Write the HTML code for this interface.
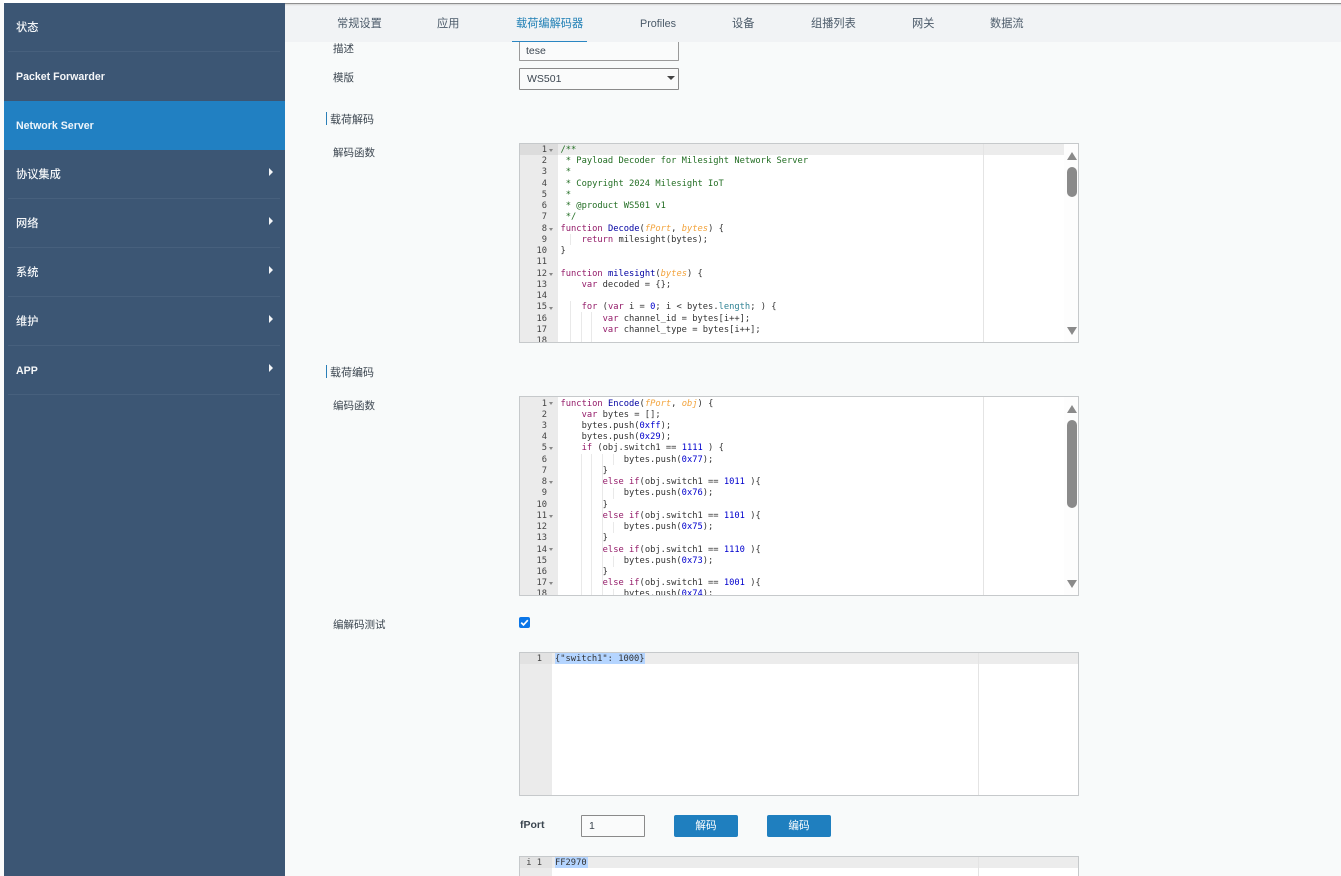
<!DOCTYPE html>
<html lang="zh"><head><meta charset="utf-8"><title>Network Server</title>
<style>
html{margin:0;padding:0;width:1341px;height:876px;overflow:hidden;background:#f8fafa;}
body{margin:0;padding:0;background:#f8fafa;width:1341px;height:876px;position:relative;overflow:hidden;font-family:"Liberation Sans","Noto Sans CJK SC",sans-serif;font-size:11px;color:#3c4650;}
.a{position:absolute;white-space:nowrap;}
#side{left:4px;top:3px;width:281px;height:873px;background:#3c5674;}
.item{position:absolute;left:12px;color:#f4f6f8;font-weight:500;font-size:11.2px;line-height:14px;}
.lat{font-weight:bold;font-size:10.6px;}
.sep{position:absolute;left:4px;width:272px;height:1px;background:#47607d;}
.arr{position:absolute;left:265px;width:0;height:0;border-left:4px solid #f4f6f8;border-top:4px solid transparent;border-bottom:4px solid transparent;}
.tab{position:absolute;top:17px;font-size:11.2px;line-height:14px;color:#4b5a69;}
.lab{position:absolute;left:333px;font-size:10.5px;line-height:14px;color:#3c4650;}
.h{position:absolute;left:330px;font-size:11px;line-height:14px;color:#3c4650;}
.bar{position:absolute;left:326px;width:1px;height:13px;background:#2a7fb8;}
.box{position:absolute;left:519px;width:558px;border:1px solid #c6c9cb;background:#fff;overflow:hidden;}
.gut{position:absolute;left:0;top:0;bottom:0;background:#ebebeb;}
.act{position:absolute;left:0;right:0;top:0;height:11px;background:#ececec;}
.actg{position:absolute;left:0;top:0;height:11px;background:#dcdcdc;}
.pm{position:absolute;top:0;bottom:0;width:1px;background:#e4e4e4;}
.code,.nums{position:absolute;top:1px;font-family:"DejaVu Sans Mono","Liberation Mono",monospace;font-size:8.75px;line-height:11.23px;white-space:pre;color:#333;}
.nums{left:0;text-align:right;color:#444;}
.fold{position:absolute;left:29px;margin-top:1px;width:0;height:0;border-top:3px solid #888;border-left:2px solid transparent;border-right:2px solid transparent;}
.g{position:absolute;width:1px;background:#e9e9e9;}
.sb{position:absolute;left:544px;top:0;bottom:0;width:14px;background:#fdfdfd;}
.up{position:absolute;left:547px;width:0;height:0;border-bottom:8px solid #8a8a8a;border-left:5px solid transparent;border-right:5px solid transparent;}
.dn{position:absolute;left:547px;width:0;height:0;border-top:8px solid #8a8a8a;border-left:5px solid transparent;border-right:5px solid transparent;}
.th{position:absolute;left:547px;width:10px;background:#8a8a8a;border-radius:5px;}
.c{color:#236e24}.k{color:#931a68}.f{color:#0000a2}.p{color:#f2a33c;font-style:italic}.n{color:#0000cd}.s{color:#318495}
.btn{position:absolute;top:815px;width:64px;height:22px;background:#1f7fbf;border-radius:2px;color:#fff;text-align:center;font-size:10.6px;line-height:22px;}
.sel{background:#b5d5ff;}
</style></head><body>

<div class="a" style="left:0;top:0;width:1341px;height:3px;background:#fff;"></div>
<div class="a" style="left:0;top:0;width:4px;height:876px;background:#fbfbfb;"></div>

<div class="a" style="left:285px;top:3px;width:1056px;height:39px;background:#f1f3f5;"></div>
<div class="a" style="left:285px;top:3px;width:1056px;height:1px;background:#8f8f8f;"></div>
<div class="a" style="left:285px;top:4px;width:1056px;height:2px;background:linear-gradient(#d4d4d4,#f1f3f5);"></div>

<div id="side" class="a">
  <div class="item" style="top:18px;">状态</div><div class="sep" style="top:48px;"></div>
  <div class="item lat" style="top:67px;">Packet Forwarder</div>
  <div class="a" style="left:0;top:98px;width:281px;height:49px;background:#2180c2;"></div>
  <div class="item lat" style="top:116px;color:#eef5fb;">Network Server</div>
  <div class="item" style="top:165px;">协议集成</div><div class="arr" style="top:165px;"></div><div class="sep" style="top:195px;"></div>
  <div class="item" style="top:214px;">网络</div><div class="arr" style="top:214px;"></div><div class="sep" style="top:244px;"></div>
  <div class="item" style="top:263px;">系统</div><div class="arr" style="top:263px;"></div><div class="sep" style="top:293px;"></div>
  <div class="item" style="top:312px;">维护</div><div class="arr" style="top:312px;"></div><div class="sep" style="top:342px;"></div>
  <div class="item lat" style="top:361px;">APP</div><div class="arr" style="top:361px;"></div><div class="sep" style="top:391px;"></div>
</div>

<div class="tab" style="left:337px;">常规设置</div>
<div class="tab" style="left:437px;">应用</div>
<div class="tab" style="left:516px;color:#1f7fb5;">载荷编解码器</div>
<div class="a" style="left:512px;top:41px;width:75px;height:1px;background:#2a86c2;"></div>
<div class="tab" style="left:640px;font-size:10.8px;">Profiles</div>
<div class="tab" style="left:732px;">设备</div>
<div class="tab" style="left:811px;">组播列表</div>
<div class="tab" style="left:912px;">网关</div>
<div class="tab" style="left:990px;">数据流</div>

<div class="a" style="left:519px;top:42px;width:160px;height:19px;border:1px solid #9a9a9a;border-top:0;box-sizing:border-box;background:#fafbfb;border-radius:0 0 1px 1px;"></div>
<div class="a" style="left:526px;top:45px;font-size:10.5px;line-height:13px;">tese</div>
<div class="lab" style="top:42px;">描述</div>
<div class="lab" style="top:71px;">模版</div>
<div class="a" style="left:519px;top:68px;width:160px;height:22px;box-sizing:border-box;border:1px solid #8a8a8a;border-radius:1px;background:#fafbfb;"></div>
<div class="a" style="left:527px;top:72px;font-size:10.5px;line-height:14px;">WS501</div>
<div class="a" style="left:667px;top:76px;width:0;height:0;border-top:4px solid #444;border-left:4px solid transparent;border-right:4px solid transparent;"></div>

<div class="bar" style="top:112px;"></div><div class="h" style="top:113px;">载荷解码</div>
<div class="lab" style="top:146px;">解码函数</div>

<div class="box" style="top:143px;height:198px;">
  <div class="act"></div><div class="gut" style="width:38px;"></div><div class="actg" style="width:38px;"></div>
  <div class="pm" style="left:463px;"></div>
  <div class="g" style="left:50px;top:90px;height:11px;"></div>
  <div class="g" style="left:50px;top:157px;height:41px;"></div>
  <div class="g" style="left:61px;top:168px;height:30px;"></div>
  <div class="g" style="left:71px;top:168px;height:30px;"></div>
  <div class="nums" style="width:27px;">1
2
3
4
5
6
7
8
9
10
11
12
13
14
15
16
17
18</div>
  <div class="fold" style="top:4px;"></div><div class="fold" style="top:83px;"></div><div class="fold" style="top:128px;"></div><div class="fold" style="top:162px;"></div>
  <div class="code" style="left:40.5px;"><span class="c">/**
 * Payload Decoder for Milesight Network Server
 *
 * Copyright 2024 Milesight IoT
 *
 * @product WS501 v1
 */</span>
<span class="k">function</span> <span class="f">Decode</span>(<span class="p">fPort</span>, <span class="p">bytes</span>) {
    <span class="k">return</span> milesight(bytes);
}

<span class="k">function</span> <span class="f">milesight</span>(<span class="p">bytes</span>) {
    <span class="k">var</span> decoded = {};

    <span class="k">for</span> (<span class="k">var</span> i = <span class="n">0</span>; i &lt; bytes.<span class="s">length</span>; ) {
        <span class="k">var</span> channel_id = bytes[i++];
        <span class="k">var</span> channel_type = bytes[i++];
        </div>
  <div class="sb"></div>
  <div class="up" style="top:8px;"></div><div class="th" style="top:23px;height:30px;"></div><div class="dn" style="top:183px;"></div>
</div>

<div class="bar" style="top:365px;"></div><div class="h" style="top:366px;">载荷编码</div>
<div class="lab" style="top:399px;">编码函数</div>

<div class="box" style="top:396px;height:198px;">
  <div class="gut" style="width:38px;"></div>
  <div class="pm" style="left:463px;"></div>
  <div class="g" style="left:61px;top:57px;height:141px;"></div>
  <div class="g" style="left:71px;top:57px;height:141px;"></div>
  <div class="g" style="left:82px;top:57px;height:141px;"></div>
  <div class="g" style="left:93px;top:57px;height:11px;"></div>
  <div class="g" style="left:93px;top:91px;height:11px;"></div>
  <div class="g" style="left:93px;top:125px;height:11px;"></div>
  <div class="g" style="left:93px;top:159px;height:11px;"></div>
  <div class="g" style="left:93px;top:192px;height:6px;"></div>
  <div class="nums" style="width:27px;top:1.5px;">1
2
3
4
5
6
7
8
9
10
11
12
13
14
15
16
17
18</div>
  <div class="fold" style="top:4px;"></div><div class="fold" style="top:49px;"></div><div class="fold" style="top:83px;"></div><div class="fold" style="top:117px;"></div><div class="fold" style="top:150px;"></div><div class="fold" style="top:184px;"></div>
  <div class="code" style="left:40.5px;top:1.5px;"><span class="k">function</span> <span class="f">Encode</span>(<span class="p">fPort</span>, <span class="p">obj</span>) {
    <span class="k">var</span> bytes = [];
    bytes.push(<span class="n">0xff</span>);
    bytes.push(<span class="n">0x29</span>);
    <span class="k">if</span> (obj.switch1 == <span class="n">1111</span> ) {
            bytes.push(<span class="n">0x77</span>);
        }
        <span class="k">else if</span>(obj.switch1 == <span class="n">1011</span> ){
            bytes.push(<span class="n">0x76</span>);
        }
        <span class="k">else if</span>(obj.switch1 == <span class="n">1101</span> ){
            bytes.push(<span class="n">0x75</span>);
        }
        <span class="k">else if</span>(obj.switch1 == <span class="n">1110</span> ){
            bytes.push(<span class="n">0x73</span>);
        }
        <span class="k">else if</span>(obj.switch1 == <span class="n">1001</span> ){
            bytes.push(<span class="n">0x74</span>);</div>
  <div class="sb"></div>
  <div class="up" style="top:8px;"></div><div class="th" style="top:23px;height:88px;"></div><div class="dn" style="top:183px;"></div>
</div>

<div class="lab" style="top:618px;">编解码测试</div>
<div class="a" style="left:519px;top:617px;width:11px;height:11px;background:#0b76e8;border-radius:2px;">
  <svg width="11" height="11" viewBox="0 0 11 11" style="display:block;"><path d="M2.2 5.6 L4.5 7.9 L8.8 3.2" fill="none" stroke="#fff" stroke-width="1.7"/></svg>
</div>

<div class="box" style="top:652px;height:142px;">
  <div class="act"></div><div class="gut" style="width:32px;"></div><div class="actg" style="width:32px;background:#e2e2e2;"></div>
  <div class="pm" style="left:458px;"></div>
  <div class="nums" style="width:22px;">1</div>
  <div class="a sel" style="left:35px;top:0;width:90px;height:11px;"></div>
  <div class="code" style="left:35px;">{"switch1": 1000}</div>
</div>

<div class="a" style="left:520px;top:818px;font-size:10.5px;font-weight:bold;line-height:14px;color:#3c4650;">fPort</div>
<div class="a" style="left:581px;top:815px;width:64px;height:22px;box-sizing:border-box;border:1px solid #8a8a8a;border-radius:1px;background:#fafbfb;"></div>
<div class="a" style="left:589px;top:819px;font-size:10.5px;line-height:14px;">1</div>
<div class="btn" style="left:674px;">解码</div>
<div class="btn" style="left:767px;">编码</div>

<div class="box" style="top:856px;height:20px;border-bottom:0;">
  <div class="act"></div><div class="gut" style="width:32px;"></div><div class="actg" style="width:32px;background:#e2e2e2;"></div>
  <div class="pm" style="left:458px;"></div>
  <div class="nums" style="width:22px;">i 1</div>
  <div class="a sel" style="left:35px;top:0;width:33px;height:11px;"></div>
  <div class="code" style="left:35px;">FF2970</div>
</div>

</body></html>
